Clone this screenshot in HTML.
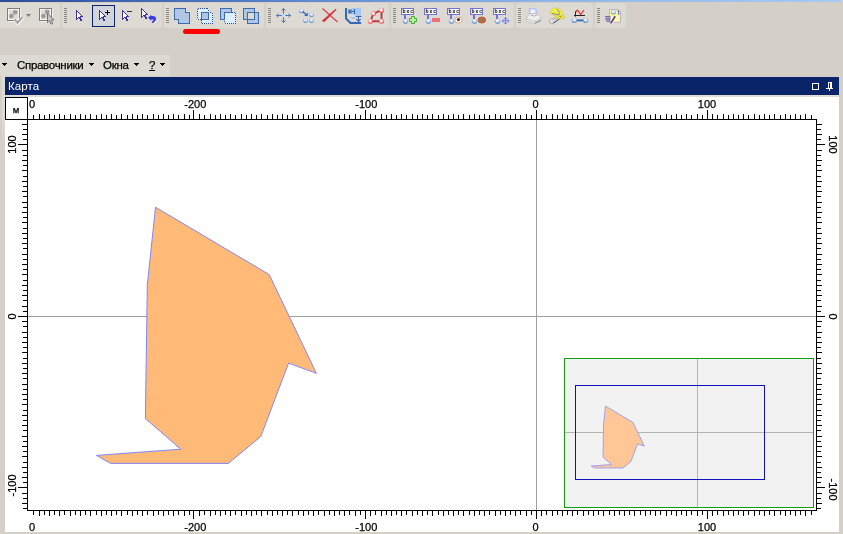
<!DOCTYPE html>
<html lang="ru"><head><meta charset="utf-8"><title>Карта</title>
<style>
html,body{margin:0;padding:0;}
body{width:843px;height:534px;overflow:hidden;background:#d4d0c8;position:relative;font-family:"Liberation Sans",Arial,sans-serif;font-size:11px;color:#000;}
.abs{position:absolute;}
.topstrip{left:0;top:0;width:841px;height:2px;background:linear-gradient(90deg,#2b4b9b 0%,#5c86cf 35%,#8fb6ea 65%,#a6caf0 100%);}
.band{top:3px;height:25px;background:#dddad3;border-radius:3px;}
.menuband{left:0;top:55px;width:170px;height:21px;background:#dddad3;}
.menu{-webkit-text-stroke:0.25px #000;top:58px;height:14px;line-height:14px;font-size:11.5px;letter-spacing:-0.3px;white-space:nowrap;}
.title{left:5px;top:77px;width:834px;height:18px;background:#0a246a;color:#fff;}
.title span{position:absolute;left:3px;top:1px;font-size:11.5px;line-height:16px;letter-spacing:0.1px;}
.white{left:5px;top:97px;width:834px;height:435px;background:#fff;}
.substrip{left:5px;top:95px;width:834px;height:2px;background:#e0ddd6;}
.lstrip{left:2px;top:76px;width:3px;height:70px;background:linear-gradient(180deg,#dedbd4 0%,#dedbd4 60%,#d4d0c8 100%);}
svg.cv,svg.tb{position:absolute;left:0;top:0;}
svg.cv,.menu,.title span{will-change:transform;}
</style></head><body>
<div class="abs topstrip"></div>
<div class="abs band" style="left:-3px;width:63px"></div>
<div class="abs band" style="left:62px;width:100px"></div>
<div class="abs band" style="left:164px;width:100px"></div>
<div class="abs band" style="left:266px;width:123px"></div>
<div class="abs band" style="left:391px;width:123px"></div>
<div class="abs band" style="left:516px;width:77px"></div>
<div class="abs band" style="left:595px;width:31px"></div>
<div class="abs menuband"></div>
<div class="abs menu" style="left:17px">Справочники</div>
<div class="abs menu" style="left:103px">Окна</div>
<div class="abs menu" style="left:149px;text-decoration:underline">?</div>
<div class="abs lstrip"></div>
<div class="abs title"><span>Карта</span></div>
<div class="abs substrip"></div>
<div class="abs white"></div>
<svg class="cv" width="843" height="534" viewBox="0 0 843 534">
<g shape-rendering="crispEdges">
<rect x="536" y="120" width="1" height="390" fill="#a0a0a0"/>
<rect x="28" y="316" width="788" height="1" fill="#a0a0a0"/>
</g>
<polygon points="155.5,207.2 269.2,274.6 316.4,373.3 288.6,363.1 260.8,436.5 228.3,463.4 110.6,463.4 96.4,455.4 180.8,449.2 145.4,418.6 147.3,285.4" fill="#ffba77" stroke="#8484fa" stroke-width="1" stroke-linejoin="miter"/>
<g shape-rendering="crispEdges">
<rect x="564.5" y="358.5" width="249" height="149" fill="#f2f2f2" stroke="#10a010" stroke-width="1"/>
<rect x="697" y="359" width="1" height="148" fill="#b4b4b4"/>
<rect x="565" y="432" width="248" height="1" fill="#b4b4b4"/>
</g>
<polygon points="605.49,406.10 632.95,422.38 644.35,446.22 637.63,443.75 630.92,461.48 623.07,467.98 594.65,467.98 591.22,466.04 611.60,464.55 603.05,457.16 603.51,424.99" fill="#ffc795" stroke="#a0a0f4" stroke-width="1"/>
<rect x="575.5" y="385.5" width="189" height="94" fill="none" stroke="#1010c0" stroke-width="1" shape-rendering="crispEdges"/>
<g shape-rendering="crispEdges" fill="#000">
<rect x="5.5" y="97.5" width="22" height="22" fill="#fff" stroke="#000" stroke-width="1"/>
<rect x="27" y="119" width="790" height="1"/>
<rect x="27" y="510" width="790" height="1"/>
<rect x="27" y="119" width="1" height="392"/>
<rect x="816" y="119" width="1" height="392"/>
<path d="M33 115h1v4h-1zM39 114h1v5h-1zM44 115h1v4h-1zM49 114h1v5h-1zM54 115h1v4h-1zM59 114h1v5h-1zM64 115h1v4h-1zM70 114h1v5h-1zM75 115h1v4h-1zM80 114h1v5h-1zM85 115h1v4h-1zM90 114h1v5h-1zM96 115h1v4h-1zM101 114h1v5h-1zM106 115h1v4h-1zM111 114h1v5h-1zM116 115h1v4h-1zM121 114h1v5h-1zM127 115h1v4h-1zM132 114h1v5h-1zM137 115h1v4h-1zM142 114h1v5h-1zM147 115h1v4h-1zM153 114h1v5h-1zM158 115h1v4h-1zM163 114h1v5h-1zM168 115h1v4h-1zM173 114h1v5h-1zM178 115h1v4h-1zM184 114h1v5h-1zM189 115h1v4h-1zM199 114h1v5h-1zM204 115h1v4h-1zM210 114h1v5h-1zM215 115h1v4h-1zM220 114h1v5h-1zM225 115h1v4h-1zM230 114h1v5h-1zM235 115h1v4h-1zM241 114h1v5h-1zM246 115h1v4h-1zM251 114h1v5h-1zM256 115h1v4h-1zM261 114h1v5h-1zM267 115h1v4h-1zM272 114h1v5h-1zM277 115h1v4h-1zM282 114h1v5h-1zM287 115h1v4h-1zM292 114h1v5h-1zM298 115h1v4h-1zM303 114h1v5h-1zM308 115h1v4h-1zM313 114h1v5h-1zM318 115h1v4h-1zM324 114h1v5h-1zM329 115h1v4h-1zM334 114h1v5h-1zM339 115h1v4h-1zM344 114h1v5h-1zM349 115h1v4h-1zM355 114h1v5h-1zM360 115h1v4h-1zM370 114h1v5h-1zM375 115h1v4h-1zM381 114h1v5h-1zM386 115h1v4h-1zM391 114h1v5h-1zM396 115h1v4h-1zM401 114h1v5h-1zM406 115h1v4h-1zM412 114h1v5h-1zM417 115h1v4h-1zM422 114h1v5h-1zM427 115h1v4h-1zM432 114h1v5h-1zM438 115h1v4h-1zM443 114h1v5h-1zM448 115h1v4h-1zM453 114h1v5h-1zM458 115h1v4h-1zM463 114h1v5h-1zM469 115h1v4h-1zM474 114h1v5h-1zM479 115h1v4h-1zM484 114h1v5h-1zM489 115h1v4h-1zM495 114h1v5h-1zM500 115h1v4h-1zM505 114h1v5h-1zM510 115h1v4h-1zM515 114h1v5h-1zM520 115h1v4h-1zM526 114h1v5h-1zM531 115h1v4h-1zM541 114h1v5h-1zM546 115h1v4h-1zM552 114h1v5h-1zM557 115h1v4h-1zM562 114h1v5h-1zM567 115h1v4h-1zM572 114h1v5h-1zM577 115h1v4h-1zM583 114h1v5h-1zM588 115h1v4h-1zM593 114h1v5h-1zM598 115h1v4h-1zM603 114h1v5h-1zM609 115h1v4h-1zM614 114h1v5h-1zM619 115h1v4h-1zM624 114h1v5h-1zM629 115h1v4h-1zM634 114h1v5h-1zM640 115h1v4h-1zM645 114h1v5h-1zM650 115h1v4h-1zM655 114h1v5h-1zM660 115h1v4h-1zM666 114h1v5h-1zM671 115h1v4h-1zM676 114h1v5h-1zM681 115h1v4h-1zM686 114h1v5h-1zM691 115h1v4h-1zM697 114h1v5h-1zM702 115h1v4h-1zM712 114h1v5h-1zM717 115h1v4h-1zM723 114h1v5h-1zM728 115h1v4h-1zM733 114h1v5h-1zM738 115h1v4h-1zM743 114h1v5h-1zM748 115h1v4h-1zM754 114h1v5h-1zM759 115h1v4h-1zM764 114h1v5h-1zM769 115h1v4h-1zM774 114h1v5h-1zM780 115h1v4h-1zM785 114h1v5h-1zM790 115h1v4h-1zM795 114h1v5h-1zM800 115h1v4h-1zM805 114h1v5h-1zM811 115h1v4h-1z"/>
<path d="M33 511h1v4h-1zM39 511h1v5h-1zM44 511h1v4h-1zM49 511h1v5h-1zM54 511h1v4h-1zM59 511h1v5h-1zM64 511h1v4h-1zM70 511h1v5h-1zM75 511h1v4h-1zM80 511h1v5h-1zM85 511h1v4h-1zM90 511h1v5h-1zM96 511h1v4h-1zM101 511h1v5h-1zM106 511h1v4h-1zM111 511h1v5h-1zM116 511h1v4h-1zM121 511h1v5h-1zM127 511h1v4h-1zM132 511h1v5h-1zM137 511h1v4h-1zM142 511h1v5h-1zM147 511h1v4h-1zM153 511h1v5h-1zM158 511h1v4h-1zM163 511h1v5h-1zM168 511h1v4h-1zM173 511h1v5h-1zM178 511h1v4h-1zM184 511h1v5h-1zM189 511h1v4h-1zM199 511h1v5h-1zM204 511h1v4h-1zM210 511h1v5h-1zM215 511h1v4h-1zM220 511h1v5h-1zM225 511h1v4h-1zM230 511h1v5h-1zM235 511h1v4h-1zM241 511h1v5h-1zM246 511h1v4h-1zM251 511h1v5h-1zM256 511h1v4h-1zM261 511h1v5h-1zM267 511h1v4h-1zM272 511h1v5h-1zM277 511h1v4h-1zM282 511h1v5h-1zM287 511h1v4h-1zM292 511h1v5h-1zM298 511h1v4h-1zM303 511h1v5h-1zM308 511h1v4h-1zM313 511h1v5h-1zM318 511h1v4h-1zM324 511h1v5h-1zM329 511h1v4h-1zM334 511h1v5h-1zM339 511h1v4h-1zM344 511h1v5h-1zM349 511h1v4h-1zM355 511h1v5h-1zM360 511h1v4h-1zM370 511h1v5h-1zM375 511h1v4h-1zM381 511h1v5h-1zM386 511h1v4h-1zM391 511h1v5h-1zM396 511h1v4h-1zM401 511h1v5h-1zM406 511h1v4h-1zM412 511h1v5h-1zM417 511h1v4h-1zM422 511h1v5h-1zM427 511h1v4h-1zM432 511h1v5h-1zM438 511h1v4h-1zM443 511h1v5h-1zM448 511h1v4h-1zM453 511h1v5h-1zM458 511h1v4h-1zM463 511h1v5h-1zM469 511h1v4h-1zM474 511h1v5h-1zM479 511h1v4h-1zM484 511h1v5h-1zM489 511h1v4h-1zM495 511h1v5h-1zM500 511h1v4h-1zM505 511h1v5h-1zM510 511h1v4h-1zM515 511h1v5h-1zM520 511h1v4h-1zM526 511h1v5h-1zM531 511h1v4h-1zM541 511h1v5h-1zM546 511h1v4h-1zM552 511h1v5h-1zM557 511h1v4h-1zM562 511h1v5h-1zM567 511h1v4h-1zM572 511h1v5h-1zM577 511h1v4h-1zM583 511h1v5h-1zM588 511h1v4h-1zM593 511h1v5h-1zM598 511h1v4h-1zM603 511h1v5h-1zM609 511h1v4h-1zM614 511h1v5h-1zM619 511h1v4h-1zM624 511h1v5h-1zM629 511h1v4h-1zM634 511h1v5h-1zM640 511h1v4h-1zM645 511h1v5h-1zM650 511h1v4h-1zM655 511h1v5h-1zM660 511h1v4h-1zM666 511h1v5h-1zM671 511h1v4h-1zM676 511h1v5h-1zM681 511h1v4h-1zM686 511h1v5h-1zM691 511h1v4h-1zM697 511h1v5h-1zM702 511h1v4h-1zM712 511h1v5h-1zM717 511h1v4h-1zM723 511h1v5h-1zM728 511h1v4h-1zM733 511h1v5h-1zM738 511h1v4h-1zM743 511h1v5h-1zM748 511h1v4h-1zM754 511h1v5h-1zM759 511h1v4h-1zM764 511h1v5h-1zM769 511h1v4h-1zM774 511h1v5h-1zM780 511h1v4h-1zM785 511h1v5h-1zM790 511h1v4h-1zM795 511h1v5h-1zM800 511h1v4h-1zM805 511h1v5h-1zM811 511h1v4h-1z"/>
<path d="M22 124h5v1h-5zM23 129h4v1h-4zM22 134h5v1h-5zM23 139h4v1h-4zM22 150h5v1h-5zM23 155h4v1h-4zM22 160h5v1h-5zM23 165h4v1h-4zM22 170h5v1h-5zM23 176h4v1h-4zM22 181h5v1h-5zM23 186h4v1h-4zM22 191h5v1h-5zM23 196h4v1h-4zM22 202h5v1h-5zM23 207h4v1h-4zM22 212h5v1h-5zM23 217h4v1h-4zM22 222h5v1h-5zM23 228h4v1h-4zM22 233h5v1h-5zM23 238h4v1h-4zM22 243h5v1h-5zM23 248h4v1h-4zM22 254h5v1h-5zM23 259h4v1h-4zM22 264h5v1h-5zM23 269h4v1h-4zM22 274h5v1h-5zM23 280h4v1h-4zM22 285h5v1h-5zM23 290h4v1h-4zM22 295h5v1h-5zM23 300h4v1h-4zM22 306h5v1h-5zM23 311h4v1h-4zM22 321h5v1h-5zM23 326h4v1h-4zM22 332h5v1h-5zM23 337h4v1h-4zM22 342h5v1h-5zM23 347h4v1h-4zM22 352h5v1h-5zM23 358h4v1h-4zM22 363h5v1h-5zM23 368h4v1h-4zM22 373h5v1h-5zM23 378h4v1h-4zM22 384h5v1h-5zM23 389h4v1h-4zM22 394h5v1h-5zM23 399h4v1h-4zM22 404h5v1h-5zM23 410h4v1h-4zM22 415h5v1h-5zM23 420h4v1h-4zM22 425h5v1h-5zM23 430h4v1h-4zM22 436h5v1h-5zM23 441h4v1h-4zM22 446h5v1h-5zM23 451h4v1h-4zM22 456h5v1h-5zM23 462h4v1h-4zM22 467h5v1h-5zM23 472h4v1h-4zM22 477h5v1h-5zM23 482h4v1h-4zM22 493h5v1h-5zM23 498h4v1h-4zM22 503h5v1h-5zM23 508h4v1h-4z"/>
<path d="M817 124h5v1h-5zM817 129h4v1h-4zM817 134h5v1h-5zM817 139h4v1h-4zM817 150h5v1h-5zM817 155h4v1h-4zM817 160h5v1h-5zM817 165h4v1h-4zM817 170h5v1h-5zM817 176h4v1h-4zM817 181h5v1h-5zM817 186h4v1h-4zM817 191h5v1h-5zM817 196h4v1h-4zM817 202h5v1h-5zM817 207h4v1h-4zM817 212h5v1h-5zM817 217h4v1h-4zM817 222h5v1h-5zM817 228h4v1h-4zM817 233h5v1h-5zM817 238h4v1h-4zM817 243h5v1h-5zM817 248h4v1h-4zM817 254h5v1h-5zM817 259h4v1h-4zM817 264h5v1h-5zM817 269h4v1h-4zM817 274h5v1h-5zM817 280h4v1h-4zM817 285h5v1h-5zM817 290h4v1h-4zM817 295h5v1h-5zM817 300h4v1h-4zM817 306h5v1h-5zM817 311h4v1h-4zM817 321h5v1h-5zM817 326h4v1h-4zM817 332h5v1h-5zM817 337h4v1h-4zM817 342h5v1h-5zM817 347h4v1h-4zM817 352h5v1h-5zM817 358h4v1h-4zM817 363h5v1h-5zM817 368h4v1h-4zM817 373h5v1h-5zM817 378h4v1h-4zM817 384h5v1h-5zM817 389h4v1h-4zM817 394h5v1h-5zM817 399h4v1h-4zM817 404h5v1h-5zM817 410h4v1h-4zM817 415h5v1h-5zM817 420h4v1h-4zM817 425h5v1h-5zM817 430h4v1h-4zM817 436h5v1h-5zM817 441h4v1h-4zM817 446h5v1h-5zM817 451h4v1h-4zM817 456h5v1h-5zM817 462h4v1h-4zM817 467h5v1h-5zM817 472h4v1h-4zM817 477h5v1h-5zM817 482h4v1h-4zM817 493h5v1h-5zM817 498h4v1h-4zM817 503h5v1h-5zM817 508h4v1h-4z"/>
<rect x="193" y="110" width="1" height="9"/>
<rect x="193" y="511" width="1" height="8"/>
<rect x="365" y="110" width="1" height="9"/>
<rect x="365" y="511" width="1" height="8"/>
<rect x="536" y="110" width="1" height="9"/>
<rect x="536" y="511" width="1" height="8"/>
<rect x="707" y="110" width="1" height="9"/>
<rect x="707" y="511" width="1" height="8"/>
<rect x="18" y="144" width="9" height="1"/>
<rect x="817" y="144" width="8" height="1"/>
<rect x="18" y="316" width="9" height="1"/>
<rect x="817" y="316" width="8" height="1"/>
<rect x="18" y="487" width="9" height="1"/>
<rect x="817" y="487" width="8" height="1"/>
</g>
<g shape-rendering="crispEdges" fill="#000">
<path d="M2 63h5v1h-1v1h-1v1h-1v-1h-1v-1h-1z"/>
<path d="M89 63h5v1h-1v1h-1v1h-1v-1h-1v-1h-1z"/>
<path d="M134 63h5v1h-1v1h-1v1h-1v-1h-1v-1h-1z"/>
<path d="M160 63h5v1h-1v1h-1v1h-1v-1h-1v-1h-1z"/>
</g>
<g shape-rendering="crispEdges" fill="#fff">
<path d="M812 83h7v7h-7zM813 84v5h5v-5z" fill-rule="evenodd"/>
<path d="M828 82h4v6h-2v-5h-1v5h-1z"/>
<rect x="826" y="88" width="7" height="1"/>
<rect x="829" y="89" width="1" height="2"/>
</g>
<g font-family="Liberation Sans, Arial, sans-serif" font-size="11" fill="#000" stroke="#000" stroke-width="0.25">
<text x="29" y="108">0</text>
<text x="29" y="531">0</text>
<text x="195.3" y="108" text-anchor="middle">-200</text>
<text x="195.3" y="531" text-anchor="middle">-200</text>
<text x="366.3" y="108" text-anchor="middle">-100</text>
<text x="366.3" y="531" text-anchor="middle">-100</text>
<text x="535.5" y="108" text-anchor="middle">0</text>
<text x="535.5" y="531" text-anchor="middle">0</text>
<text x="707.0" y="108" text-anchor="middle">100</text>
<text x="707.0" y="531" text-anchor="middle">100</text>
<text transform="translate(16 144.5) rotate(-90)" text-anchor="middle">100</text>
<text transform="translate(829 144.5) rotate(90)" text-anchor="middle">100</text>
<text transform="translate(16 316.5) rotate(-90)" text-anchor="middle">0</text>
<text transform="translate(829 316.5) rotate(90)" text-anchor="middle">0</text>
<text transform="translate(16 485.5) rotate(-90)" text-anchor="middle">-100</text>
<text transform="translate(829 489.5) rotate(90)" text-anchor="middle">-100</text>
<text x="16" y="113" text-anchor="middle" font-size="9.5">м</text>
</g>
</svg>
<svg class="tb" width="843" height="50" viewBox="0 0 843 50">
<defs>
<radialGradient id="ball" cx="0.5" cy="0.36" r="0.62"><stop offset="0" stop-color="#f6f4fd"/><stop offset="0.42" stop-color="#dbe6f8"/><stop offset="0.78" stop-color="#74a6de"/><stop offset="1" stop-color="#3674bc"/></radialGradient>
<radialGradient id="rball" cx="0.45" cy="0.42" r="0.6"><stop offset="0" stop-color="#ffffff"/><stop offset="0.3" stop-color="#fff0f0"/><stop offset="0.7" stop-color="#ff7a80"/><stop offset="1" stop-color="#e42c3a"/></radialGradient>
</defs>
<!-- icon 1: select box + check (disabled) -->
<g>
<rect x="8.500" y="9.500" width="12" height="12" fill="none" stroke="#f4f3ef" shape-rendering="crispEdges"/>
<rect x="7.500" y="8.500" width="12" height="12" fill="#dedcd6" stroke="#7c7c7c" shape-rendering="crispEdges"/><rect x="8.500" y="9.500" width="10" height="10" fill="none" stroke="#f6f5f2" shape-rendering="crispEdges"/>
<circle cx="15.200" cy="12.300" r="2.400" fill="#9c9c9c"/><circle cx="11.400" cy="16.100" r="2.400" fill="#9c9c9c"/>
<path d="M14.800 19.600L17.700 23.100L22.800 17.500" fill="none" stroke="#f8f7f4" stroke-width="3.600"/>
<path d="M14.600 19.400L17.500 22.700L22.500 17.200" fill="none" stroke="#a2a2a2" stroke-width="2"/>
<path d="M26 14h5l-2.5 3z" fill="#7c7c7c"/>
</g>
<!-- icon 2: select box + cursor (disabled) -->
<g>
<rect x="40.500" y="9.500" width="12" height="12" fill="none" stroke="#f4f3ef" shape-rendering="crispEdges"/>
<rect x="39.500" y="8.500" width="12" height="12" fill="#dedcd6" stroke="#7c7c7c" shape-rendering="crispEdges"/><rect x="40.500" y="9.500" width="10" height="10" fill="none" stroke="#f6f5f2" shape-rendering="crispEdges"/>
<circle cx="47.200" cy="11.900" r="2.400" fill="#9c9c9c"/><circle cx="43.400" cy="16.100" r="2.400" fill="#9c9c9c"/>
<path d="M48.200 14.500V23.600L50.200 21.600L51.700 24.800H53.600V23.400L52.300 20.900H55Z" fill="#f8f7f4"/>
<path d="M47.500 13.200V22.800L49.500 20.800L51 24H52.600V22.800L51.300 20.100H54.200Z" fill="#c2c2c2" stroke="#747474" stroke-width="1"/>
</g>
<g transform="translate(64 0)" shape-rendering="crispEdges" fill="#8a8880"><rect x="0" y="8" width="3" height="1"/><rect x="0" y="10" width="3" height="1"/><rect x="0" y="12" width="3" height="1"/><rect x="0" y="14" width="3" height="1"/><rect x="0" y="16" width="3" height="1"/><rect x="0" y="18" width="3" height="1"/><rect x="0" y="20" width="3" height="1"/><rect x="0" y="22" width="3" height="1"/></g>
<g transform="translate(76 10)" shape-rendering="crispEdges"><path d="M1 2h1v1h-1zM1 3h1v1h-1zM2 3h1v1h-1zM1 4h1v1h-1zM2 4h1v1h-1zM3 4h1v1h-1zM1 5h1v1h-1zM2 5h1v1h-1zM3 5h1v1h-1zM4 5h1v1h-1zM1 6h1v1h-1zM2 6h1v1h-1zM3 6h1v1h-1zM1 7h1v1h-1z" fill="#fff"/><path d="M0 0h1v1h-1zM0 1h1v1h-1zM1 1h1v1h-1zM0 2h1v1h-1zM2 2h1v1h-1zM0 3h1v1h-1zM3 3h1v1h-1zM0 4h1v1h-1zM4 4h1v1h-1zM0 5h1v1h-1zM5 5h1v1h-1zM0 6h1v1h-1zM4 6h1v1h-1zM5 6h1v1h-1zM6 6h1v1h-1zM0 7h1v1h-1zM2 7h1v1h-1zM3 7h1v1h-1zM4 7h1v1h-1zM0 8h1v1h-1zM1 8h1v1h-1zM3 8h1v1h-1zM4 8h1v1h-1zM0 9h1v1h-1zM4 9h1v1h-1zM5 9h1v1h-1zM4 10h1v1h-1zM5 10h1v1h-1z" fill="#3a33a8"/></g>
<rect x="92.500" y="5.500" width="22" height="21" fill="#d2d4db" stroke="#0a246a" shape-rendering="crispEdges"/>
<g transform="translate(99 10)" shape-rendering="crispEdges"><path d="M1 2h1v1h-1zM1 3h1v1h-1zM2 3h1v1h-1zM1 4h1v1h-1zM2 4h1v1h-1zM3 4h1v1h-1zM1 5h1v1h-1zM2 5h1v1h-1zM3 5h1v1h-1zM4 5h1v1h-1zM1 6h1v1h-1zM2 6h1v1h-1zM3 6h1v1h-1zM1 7h1v1h-1z" fill="#fff"/><path d="M0 0h1v1h-1zM0 1h1v1h-1zM1 1h1v1h-1zM0 2h1v1h-1zM2 2h1v1h-1zM0 3h1v1h-1zM3 3h1v1h-1zM0 4h1v1h-1zM4 4h1v1h-1zM0 5h1v1h-1zM5 5h1v1h-1zM0 6h1v1h-1zM4 6h1v1h-1zM5 6h1v1h-1zM6 6h1v1h-1zM0 7h1v1h-1zM2 7h1v1h-1zM3 7h1v1h-1zM4 7h1v1h-1zM0 8h1v1h-1zM1 8h1v1h-1zM3 8h1v1h-1zM4 8h1v1h-1zM0 9h1v1h-1zM4 9h1v1h-1zM5 9h1v1h-1zM4 10h1v1h-1zM5 10h1v1h-1z" fill="#3a33a8"/></g>
<path d="M105 12.500h5M107.500 10v5" stroke="#000" stroke-width="1" shape-rendering="crispEdges"/>
<g transform="translate(122 10)" shape-rendering="crispEdges"><path d="M1 2h1v1h-1zM1 3h1v1h-1zM2 3h1v1h-1zM1 4h1v1h-1zM2 4h1v1h-1zM3 4h1v1h-1zM1 5h1v1h-1zM2 5h1v1h-1zM3 5h1v1h-1zM4 5h1v1h-1zM1 6h1v1h-1zM2 6h1v1h-1zM3 6h1v1h-1zM1 7h1v1h-1z" fill="#fff"/><path d="M0 0h1v1h-1zM0 1h1v1h-1zM1 1h1v1h-1zM0 2h1v1h-1zM2 2h1v1h-1zM0 3h1v1h-1zM3 3h1v1h-1zM0 4h1v1h-1zM4 4h1v1h-1zM0 5h1v1h-1zM5 5h1v1h-1zM0 6h1v1h-1zM4 6h1v1h-1zM5 6h1v1h-1zM6 6h1v1h-1zM0 7h1v1h-1zM2 7h1v1h-1zM3 7h1v1h-1zM4 7h1v1h-1zM0 8h1v1h-1zM1 8h1v1h-1zM3 8h1v1h-1zM4 8h1v1h-1zM0 9h1v1h-1zM4 9h1v1h-1zM5 9h1v1h-1zM4 10h1v1h-1zM5 10h1v1h-1z" fill="#3a33a8"/></g>
<rect x="127" y="11" width="5" height="1" fill="#333" shape-rendering="crispEdges"/>
<g transform="translate(141 8)" shape-rendering="crispEdges"><path d="M1 2h1v1h-1zM1 3h1v1h-1zM2 3h1v1h-1zM1 4h1v1h-1zM2 4h1v1h-1zM3 4h1v1h-1zM1 5h1v1h-1zM2 5h1v1h-1zM3 5h1v1h-1zM4 5h1v1h-1zM1 6h1v1h-1zM2 6h1v1h-1zM3 6h1v1h-1zM1 7h1v1h-1z" fill="#fff"/><path d="M0 0h1v1h-1zM0 1h1v1h-1zM1 1h1v1h-1zM0 2h1v1h-1zM2 2h1v1h-1zM0 3h1v1h-1zM3 3h1v1h-1zM0 4h1v1h-1zM4 4h1v1h-1zM0 5h1v1h-1zM5 5h1v1h-1zM0 6h1v1h-1zM4 6h1v1h-1zM5 6h1v1h-1zM6 6h1v1h-1zM0 7h1v1h-1zM2 7h1v1h-1zM3 7h1v1h-1zM4 7h1v1h-1zM0 8h1v1h-1zM1 8h1v1h-1zM3 8h1v1h-1zM4 8h1v1h-1zM0 9h1v1h-1zM4 9h1v1h-1zM5 9h1v1h-1zM4 10h1v1h-1zM5 10h1v1h-1z" fill="#3a33a8"/></g>
<path d="M154.200 23l2-2" stroke="#fff" stroke-width="1.400" fill="none"/>
<path d="M148 17.800L151.300 14.800V16.100H153.200C155.700 16.100 156.500 18.400 155.900 20C155.300 21.600 153.900 22.700 152.400 23.100L151.700 21.800C152.900 21.200 153.500 20.500 153.500 19.800C153.500 19.400 153.200 19.400 152.700 19.400H151.300V20.800Z" fill="#3c3ce4"/>
<g transform="translate(166 0)" shape-rendering="crispEdges" fill="#8a8880"><rect x="0" y="8" width="3" height="1"/><rect x="0" y="10" width="3" height="1"/><rect x="0" y="12" width="3" height="1"/><rect x="0" y="14" width="3" height="1"/><rect x="0" y="16" width="3" height="1"/><rect x="0" y="18" width="3" height="1"/><rect x="0" y="20" width="3" height="1"/><rect x="0" y="22" width="3" height="1"/></g>
<!-- union -->
<path d="M174.500 8.500h11v4h4v11h-11v-4h-4z" fill="#b1c5e6" stroke="#3d6cad" stroke-width="1" shape-rendering="crispEdges"/>
<!-- intersect -->
<g shape-rendering="crispEdges">
<path d="M197.500 8.500h10l1 1v3h3l1 1v10h-10l-1-1v-3h-3l-1-1z" fill="#ddeefd" stroke="none"/>
<path d="M197.500 8.500h10l1 1v3h3l1 1v10h-10l-1-1v-3h-3l-1-1z" fill="none" stroke="#2b4c96" stroke-width="1" stroke-dasharray="1 1"/>
<rect x="201.500" y="12.500" width="7" height="7" fill="#b1c5e6" stroke="#3d6cad"/>
</g>
<!-- subtract -->
<g shape-rendering="crispEdges">
<rect x="220.500" y="8.500" width="11" height="11" fill="#b1c5e6" stroke="#3d6cad"/>
<path d="M225 13h10l1 1v10h-10l-1-1z" fill="#ddeefd"/>
<path d="M231.500 12.500h3l1 1v10h-10l-1-1v-3" fill="none" stroke="#2b4c96" stroke-dasharray="1 1"/>
<path d="M224.500 19.500v-7h7" fill="none" stroke="#3d6cad"/>
</g>
<!-- xor -->
<g shape-rendering="crispEdges">
<rect x="243.500" y="8.500" width="11" height="11" fill="#b1c5e6" stroke="#3d6cad"/>
<rect x="247.500" y="12.500" width="11" height="11" fill="#b1c5e6" stroke="#3d6cad"/>
<rect x="248" y="13" width="6" height="6" fill="#dddad3"/>
<rect x="243.500" y="8.500" width="11" height="11" fill="none" stroke="#3d6cad"/>
<rect x="245.500" y="10.500" width="7" height="7" fill="none" stroke="#3d6cad" stroke-width="0"/>
</g>
<g transform="translate(268 0)" shape-rendering="crispEdges" fill="#8a8880"><rect x="0" y="8" width="3" height="1"/><rect x="0" y="10" width="3" height="1"/><rect x="0" y="12" width="3" height="1"/><rect x="0" y="14" width="3" height="1"/><rect x="0" y="16" width="3" height="1"/><rect x="0" y="18" width="3" height="1"/><rect x="0" y="20" width="3" height="1"/><rect x="0" y="22" width="3" height="1"/></g>
<!-- move -->
<g stroke="#4a74ba" stroke-width="1" fill="none">
<path d="M283.500 8.500v14M276.500 15.500h14"/>
<path d="M281.500 10.500l2-2l2 2M281.500 20.500l2 2l2-2M278.500 13.500l-2 2l2 2M288.500 13.500l2 2l-2 2"/>
</g>
<circle cx="283.500" cy="15.500" r="1.900" fill="#c6d8f2"/>
<!-- dots -->
<ellipse cx="301.500" cy="11" rx="2.500" ry="2.200" fill="url(#ball)"/>
<ellipse cx="311.500" cy="14.800" rx="2.500" ry="2.200" fill="url(#ball)"/>
<ellipse cx="305.500" cy="20.500" rx="2.500" ry="2.200" fill="url(#ball)"/>
<ellipse cx="311.500" cy="20.500" rx="2.500" ry="2.200" fill="url(#ball)"/>
<path d="M302.500 11.500l4 3.300" stroke="#3b69b4" stroke-width="1.400" fill="none"/>
<path d="M307.800 12.500v3.600h-3.800z" fill="#3b69b4"/>
<!-- X -->
<path d="M322.500 8.500L337.500 22" stroke="#e23b48" stroke-width="1.200" fill="none"/>
<path d="M335.500 9.200L336.300 9.800L324.200 21.800L322.200 20.800Z" fill="#d5303e" stroke="#d5303e" stroke-width="0.600"/>
<!-- L shape -->
<rect x="352" y="8" width="9" height="8" fill="#a9c6ee"/>
<path d="M346 8v10.500l4.500 4.500h10.500" fill="none" stroke="#3468b4" stroke-width="2" stroke-linejoin="round"/>
<path d="M349.500 11.500h4.500M351.700 9.300l-2.200 2.200l2.200 2.200M354.500 9v5M349 9v5" fill="none" stroke="#3468b4" stroke-width="1.100"/>
<path d="M358.500 16v5.500M356.300 19.200l2.200 2.300l2.200-2.300M355.500 16.500h6" fill="none" stroke="#3468b4" stroke-width="1.100"/>
<ellipse cx="353.200" cy="16.500" rx="2.100" ry="1.700" fill="#dce9fa"/>
<path d="M351.300 17.200c1 1.200 2.800 1.200 3.800 0" fill="none" stroke="#5a88c8" stroke-width="0.800"/>
<!-- polygon nodes -->
<path d="M381.500 10.200L373.400 13.600L370.400 21.200H381.500Z" fill="none" stroke="#b23c3c" stroke-width="1.900"/>
<circle cx="381.500" cy="10.200" r="2.500" fill="url(#rball)"/>
<circle cx="373.400" cy="13.600" r="2.500" fill="url(#rball)"/>
<circle cx="370.400" cy="21.200" r="2.500" fill="url(#rball)"/>
<circle cx="381.500" cy="21.200" r="2.500" fill="url(#rball)"/>
<g transform="translate(393 0)" shape-rendering="crispEdges" fill="#8a8880"><rect x="0" y="8" width="3" height="1"/><rect x="0" y="10" width="3" height="1"/><rect x="0" y="12" width="3" height="1"/><rect x="0" y="14" width="3" height="1"/><rect x="0" y="16" width="3" height="1"/><rect x="0" y="18" width="3" height="1"/><rect x="0" y="20" width="3" height="1"/><rect x="0" y="22" width="3" height="1"/></g>
<!-- labels -->
<g transform="translate(401 8)">
<rect x="0.5" y="0.5" width="12" height="6" fill="#fff" stroke="#7272d0" stroke-width="1" shape-rendering="crispEdges"/>
<text x="7.200" y="5" text-anchor="middle" font-family="Liberation Sans, Arial, sans-serif" font-weight="bold" font-size="5" letter-spacing="0.900" fill="#000">bxc</text>
<rect x="3" y="7" width="2" height="4" fill="#7272d0" shape-rendering="crispEdges"/>
<ellipse cx="4.5" cy="13.300" rx="2.600" ry="2.400" fill="url(#ball)"/>
</g>
<path d="M411.500 16.500h3v2h2v3h-2v2h-3v-2h-2v-3h2z" fill="#b6f29e" stroke="#49aa3a" stroke-width="1"/>
<g transform="translate(424 8)">
<rect x="0.5" y="0.5" width="12" height="6" fill="#fff" stroke="#7272d0" stroke-width="1" shape-rendering="crispEdges"/>
<text x="7.200" y="5" text-anchor="middle" font-family="Liberation Sans, Arial, sans-serif" font-weight="bold" font-size="5" letter-spacing="0.900" fill="#000">bxc</text>
<rect x="3" y="7" width="2" height="4" fill="#7272d0" shape-rendering="crispEdges"/>
<ellipse cx="4.5" cy="13.300" rx="2.600" ry="2.400" fill="url(#ball)"/>
</g>
<rect x="432" y="18" width="8" height="4" fill="#f0707c"/>
<g transform="translate(447 8)">
<rect x="0.5" y="0.5" width="12" height="6" fill="#fff" stroke="#7272d0" stroke-width="1" shape-rendering="crispEdges"/>
<text x="7.200" y="5" text-anchor="middle" font-family="Liberation Sans, Arial, sans-serif" font-weight="bold" font-size="5" letter-spacing="0.900" fill="#000">bxc</text>
<rect x="3" y="7" width="2" height="4" fill="#7272d0" shape-rendering="crispEdges"/>
<ellipse cx="4.5" cy="13.300" rx="2.600" ry="2.400" fill="url(#ball)"/>
</g>
<ellipse cx="458.500" cy="20" rx="3.800" ry="3" fill="#fff" stroke="#d9a27c" stroke-width="1"/>
<circle cx="458.500" cy="19.600" r="1.700" fill="#3c3c3c"/>
<g transform="translate(470 8)">
<rect x="0.5" y="0.5" width="12" height="6" fill="#fff" stroke="#7272d0" stroke-width="1" shape-rendering="crispEdges"/>
<text x="7.200" y="5" text-anchor="middle" font-family="Liberation Sans, Arial, sans-serif" font-weight="bold" font-size="5" letter-spacing="0.900" fill="#000">bxc</text>
<rect x="3" y="7" width="2" height="4" fill="#7272d0" shape-rendering="crispEdges"/>
<ellipse cx="4.5" cy="13.300" rx="2.600" ry="2.400" fill="url(#ball)"/>
</g>
<ellipse cx="481.800" cy="20" rx="3.800" ry="3" fill="#c46a3c" stroke="#b85a30" stroke-width="1"/>
<rect x="479.500" y="19" width="4.600" height="2" fill="#8c7a58"/>
<g transform="translate(493 8)">
<rect x="0.5" y="0.5" width="12" height="6" fill="#fff" stroke="#7272d0" stroke-width="1" shape-rendering="crispEdges"/>
<text x="7.200" y="5" text-anchor="middle" font-family="Liberation Sans, Arial, sans-serif" font-weight="bold" font-size="5" letter-spacing="0.900" fill="#000">bxc</text>
<rect x="3" y="7" width="2" height="4" fill="#7272d0" shape-rendering="crispEdges"/>
<ellipse cx="4.5" cy="13.300" rx="2.600" ry="2.400" fill="url(#ball)"/>
</g>
<g stroke="#7676fa" stroke-width="1" fill="none">
<path d="M505.500 17.500v6.500M502 20.800h7"/>
<path d="M504 19l1.500-1.500l1.500 1.500M504 22.600l1.500 1.500l1.500-1.500M503.500 19.300l-1.500 1.500l1.500 1.500M507.500 19.300l1.500 1.500l-1.500 1.500"/>
</g>
<g transform="translate(518 0)" shape-rendering="crispEdges" fill="#8a8880"><rect x="0" y="8" width="3" height="1"/><rect x="0" y="10" width="3" height="1"/><rect x="0" y="12" width="3" height="1"/><rect x="0" y="14" width="3" height="1"/><rect x="0" y="16" width="3" height="1"/><rect x="0" y="18" width="3" height="1"/><rect x="0" y="20" width="3" height="1"/><rect x="0" y="22" width="3" height="1"/></g>
<!-- printer -->
<path d="M529.500 8.600h5.200l1.600 1.600v5.300h-6.800z" fill="#dfe6fd" stroke="#b6c2f8" stroke-width="1.300"/>
<path d="M531 10.500h3.500v4h-3.500z" fill="#f4f7ff"/>
<path d="M526.400 18.300l3.200-4.800h8.400l3 4.400v2.600l-6.200 3.100l-8.400-2.700z" fill="#d4d4d4" stroke="#b8b8b8" stroke-width="0.700"/>
<path d="M527 18.200l2.900-4.200h7.800l2.700 3.800l-5.700 2.700z" fill="#efefef"/>
<path d="M530.600 14.800l3.700 1.300l3.200-1.300" fill="none" stroke="#a0a0a0" stroke-width="0.900"/>
<path d="M527 20.300l7.700 2.400l6-2.900" fill="none" stroke="#f8f8f8" stroke-width="0.800"/>
<path d="M534.900 23.100l5.800-2.800" stroke="#7c7c7c" stroke-width="1"/>
<!-- helmet -->
<path d="M549.300 21.200c0.300-1.800 2-2.800 3.600-2.400l5.600-1l1.200 1.200l-5.400 3.600c-1 1.300-2.600 1.600-3.800 1c-0.900-0.500-1.300-1.400-1.200-2.400z" fill="#d2d2d2" stroke="#a2a2a2" stroke-width="0.700"/>
<path d="M553.200 23.200l6.300-4.200" stroke="#4a4a4a" stroke-width="0.900" fill="none"/>
<circle cx="551.600" cy="21.100" r="1" fill="#f2f2f2"/>
<ellipse cx="559.300" cy="16.200" rx="5.700" ry="2.300" transform="rotate(12 559.300 16.200)" fill="#e4e438" stroke="#c6c664" stroke-width="0.700"/>
<path d="M549.900 12.900C550.400 9.600 553.800 7.500 557 7.900C560.600 8.300 562.900 11.400 563.300 15.300C559.200 16.300 553.600 15.400 549.900 12.900Z" fill="#eded42" stroke="#d0d068" stroke-width="0.700"/>
<path d="M556.700 9.100c1.700 1 2.700 2.700 3 4.900M551.600 13.300c2.600 0.800 5.200 1.200 7.900 1.300" fill="none" stroke="#8f86a0" stroke-width="1"/>
<path d="M559.500 16.500h1.700" stroke="#b04a3a" stroke-width="0.800"/>
<!-- graph -->
<path d="M575.500 11v4.500M574 15.500h11" stroke="#222" stroke-width="1" fill="none" shape-rendering="crispEdges"/>
<path d="M576 14l-2 1.500l2 1.500z" fill="#222"/>
<path d="M575.500 12l2-1.800l3.200 4.300l3.300-4.500" fill="none" stroke="#ee2a2a" stroke-width="1.200"/>
<rect x="575" y="19.500" width="10" height="1.800" fill="#3468b4"/>
<ellipse cx="574.300" cy="20.400" rx="2.600" ry="2.300" fill="url(#ball)"/>
<ellipse cx="585.700" cy="20.400" rx="2.600" ry="2.300" fill="url(#ball)"/>
<g transform="translate(597 0)" shape-rendering="crispEdges" fill="#8a8880"><rect x="0" y="8" width="3" height="1"/><rect x="0" y="10" width="3" height="1"/><rect x="0" y="12" width="3" height="1"/><rect x="0" y="14" width="3" height="1"/><rect x="0" y="16" width="3" height="1"/><rect x="0" y="18" width="3" height="1"/><rect x="0" y="20" width="3" height="1"/><rect x="0" y="22" width="3" height="1"/></g>
<!-- note -->
<path d="M609.500 9.500h9l2 2v10.800h-11z" fill="#fcf99c" stroke="#b6accc" stroke-width="0.900"/>
<path d="M605.200 16.700h5.400M605.200 18.900h5.400M606.300 21.100h4" stroke="#7a6abc" stroke-width="1.500" fill="none"/>
<path d="M616.300 16.600l-4.300 7" stroke="#fdfce0" stroke-width="1.400" fill="none"/>
<path d="M615.200 16.200l-4.400 7.200" stroke="#5a40a0" stroke-width="1.800" fill="none"/>
<ellipse cx="613.500" cy="12.300" rx="2.500" ry="2.300" fill="url(#ball)"/>
<path d="M617.700 10.800c1.700 1 1.700 3.200 0 4.200" stroke="#2a2ae6" stroke-width="1.100" fill="none" stroke-dasharray="1.700 0.700"/>
<!-- red bar -->
<rect x="183" y="29" width="37" height="5" rx="2.500" fill="#ff0000"/>
</svg>

</body></html>
